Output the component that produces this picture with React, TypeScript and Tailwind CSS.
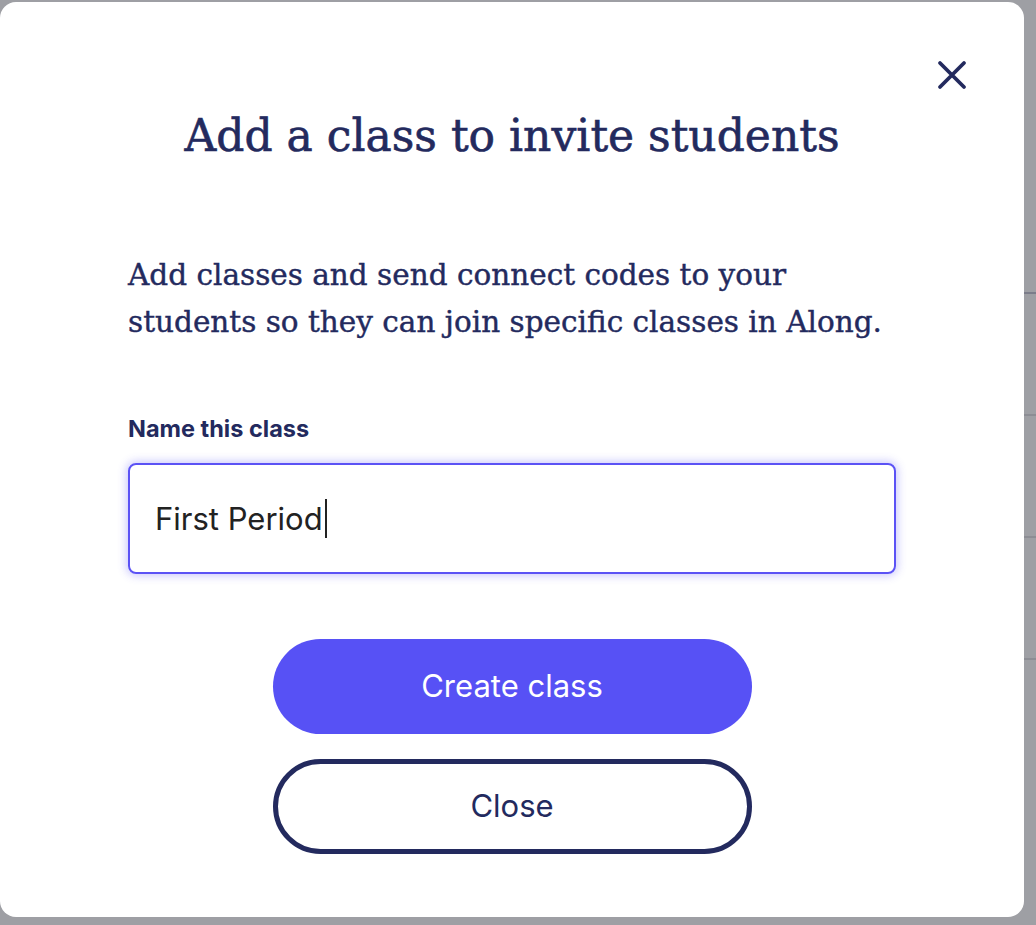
import React, { useState } from 'react';

const CloseIcon: React.FC = () => (
  <svg width="30" height="30" viewBox="0 0 30 30" fill="none">
    <path d="M3 3L27 27M27 3L3 27" stroke="#232a5e" strokeWidth="3.8" strokeLinecap="round" />
  </svg>
);

export default function App() {
  const [name, setName] = useState('First Period');

  return (
    <div className="relative h-[925px] w-[1036px] overflow-hidden bg-[#9e9fa4]">
      {/* page behind the modal, only the right edge shows */}
      <div className="absolute right-0 top-0 flex h-full w-[12px] flex-col">
        <div className="h-[292px]" />
        <div className="h-[2px] bg-[#7c7d8a]" />
        <div className="h-[120px]" />
        <div className="h-[2px] bg-[#8c8d94]" />
        <div className="h-[120px]" />
        <div className="h-[2px] bg-[#8c8d94]" />
        <div className="h-[120px]" />
        <div className="h-[2px] bg-[#8c8d94]" />
      </div>

      <div className="relative mt-[2px] flex h-[915px] w-[1024px] flex-col rounded-[16px] bg-white px-[128px] pt-[104px]">
        <button className="absolute right-[57px] top-[58px] flex items-center justify-center" aria-label="Close">
          <CloseIcon />
        </button>

        <h1 className="text-center font-['DejaVu_Serif',serif] text-[44px] leading-[60px] text-[#232a5e] [-webkit-text-stroke:0.6px_#232a5e]">
          Add a class to invite students
        </h1>

        <p className="mt-[86px] whitespace-nowrap font-['DejaVu_Serif',serif] text-[29.5px] leading-[47px] text-[#232a5e] [-webkit-text-stroke:0.4px_#232a5e]">
          Add classes and send connect codes to your
          <br />
          students so they can join specific classes in Along.
        </p>

        <label
          htmlFor="class-name"
          className="mt-[69px] block font-['Inter',sans-serif] text-[23.5px] font-bold leading-[28px] text-[#232a5e]"
        >
          Name this class
        </label>
        <div className="relative mt-[20px]">
          <input
            id="class-name"
            value={name}
            onChange={(e) => setName(e.target.value)}
            className="h-[111px] w-full rounded-[8px] border-2 border-[#5b52f5] px-[25px] font-['Inter',sans-serif] text-[31px] text-[#222] caret-transparent shadow-[0_0_8px_2px_rgba(91,82,245,0.3)] outline-none"
          />
          {/* text caret */}
          <div className="pointer-events-none absolute inset-y-0 left-[27px] flex items-center font-['Inter',sans-serif] text-[31px]">
            <span className="invisible whitespace-pre">{name}</span>
            <span className="ml-[2px] h-[39px] w-[2px] bg-[#222]" />
          </div>
        </div>

        <div className="mt-[65px] flex flex-col items-center gap-[25px]">
          <button className="h-[95px] w-[479px] rounded-full bg-[#5751f5] font-['Inter',sans-serif] text-[31px] text-white">
            Create class
          </button>
          <button className="h-[95px] w-[479px] rounded-full border-[5px] border-[#232a5e] bg-white font-['Inter',sans-serif] text-[31px] text-[#232a5e]">
            Close
          </button>
        </div>
      </div>
    </div>
  );
}
